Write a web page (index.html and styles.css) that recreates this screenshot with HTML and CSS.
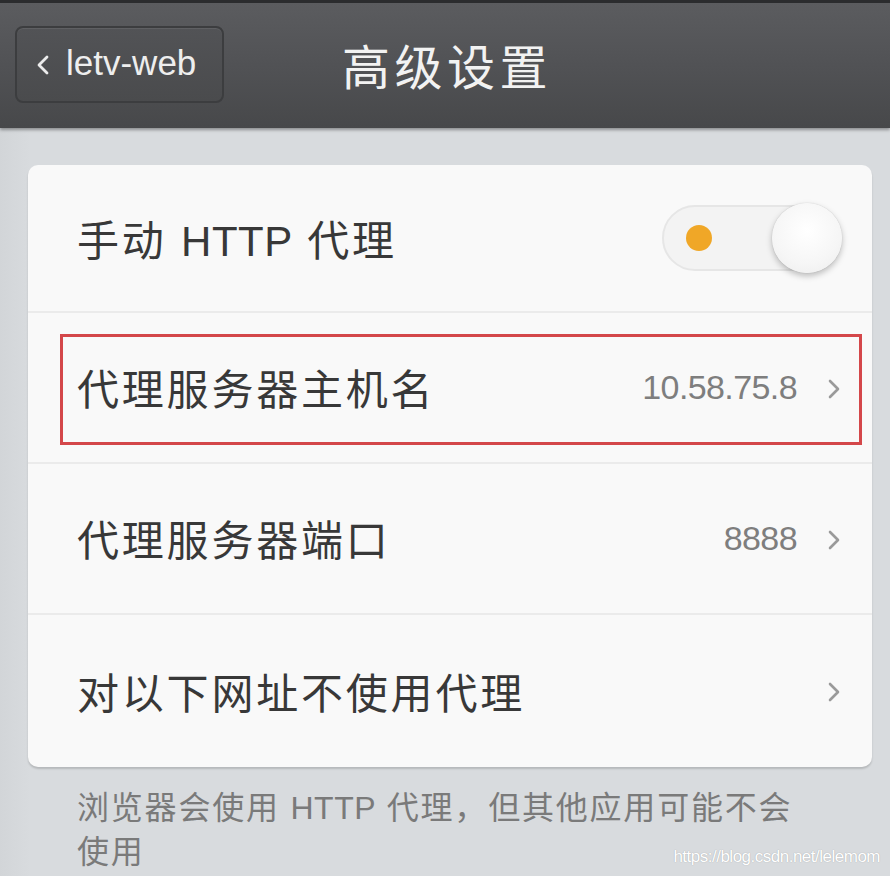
FILE: index.html
```html
<!DOCTYPE html>
<html lang="zh-CN">
<head>
<meta charset="utf-8">
<title>高级设置</title>
<link rel="stylesheet" href="styles.css">
</head>
<body>
<div class="screen">
  <header class="topbar">
    <div class="topbar-left">
      <button class="back-btn">
        <svg class="back-icon" width="16" height="22" viewBox="0 0 16 22"><polyline points="12,3 4,11 12,19" fill="none" stroke="#ececec" stroke-width="2.8" stroke-linecap="round" stroke-linejoin="round"/></svg>
        <span>letv-web</span>
      </button>
    </div>
    <h1 class="title">高级设置</h1>
    <div class="topbar-right"></div>
  </header>

  <main class="content">
    <section class="card">
      <div class="row">
        <span class="label">手动 <span class="latin">HTTP</span> 代理</span>
        <div class="toggle">
          <span class="toggle-dot"></span>
          <span class="toggle-knob"></span>
        </div>
      </div>
      <div class="row row-marked">
        <span class="label">代理服务器主机名</span>
        <span class="value">10.58.75.8</span>
        <svg class="chev" width="16" height="22" viewBox="0 0 16 22"><polyline points="4,3 12,11 4,19" fill="none" stroke="#9a9a9a" stroke-width="2.6" stroke-linecap="round" stroke-linejoin="round"/></svg>
        <span class="mark"></span>
      </div>
      <div class="row">
        <span class="label">代理服务器端口</span>
        <span class="value">8888</span>
        <svg class="chev" width="16" height="22" viewBox="0 0 16 22"><polyline points="4,3 12,11 4,19" fill="none" stroke="#9a9a9a" stroke-width="2.6" stroke-linecap="round" stroke-linejoin="round"/></svg>
      </div>
      <div class="row">
        <span class="label">对以下网址不使用代理</span>
        <span class="value"></span>
        <svg class="chev" width="16" height="22" viewBox="0 0 16 22"><polyline points="4,3 12,11 4,19" fill="none" stroke="#9a9a9a" stroke-width="2.6" stroke-linecap="round" stroke-linejoin="round"/></svg>
      </div>
    </section>
    <div class="note">
      <span class="note-line">浏览器会使用 <span class="latin">HTTP</span> 代理，但其他应用可能不会</span>
      <span class="note-line">使用</span>
    </div>
  </main>
  <div class="watermark">https://blog.csdn.net/lelemom</div>
</div>
</body>
</html>
```

FILE: styles.css
```css
html, body {
  margin: 0;
  padding: 0;
}
body {
  width: 890px;
  height: 876px;
  overflow: hidden;
  background: #d7dadd;
  font-family: "Liberation Sans", "Noto Sans CJK SC", sans-serif;
}
.screen {
  position: relative;
  width: 890px;
  height: 876px;
  background: linear-gradient(to right, #d2d5d8 0, #d8dbde 30px, #d8dbde 100%);
}
.topbar {
  height: 125px;
  border-top: 3px solid #2b2c2e;
  background: linear-gradient(to bottom, #5b5c5f 0%, #515255 50%, #47484a 100%);
  display: grid;
  grid-template-columns: 1fr auto 1fr;
  align-items: center;
  box-shadow: 0 2px 3px rgba(0, 0, 0, 0.35);
  position: relative;
  z-index: 1;
}
.topbar-left {
  padding-left: 15px;
  display: flex;
  align-items: center;
}
.back-btn {
  width: 209px;
  height: 77px;
  margin-top: -2px;
  box-sizing: border-box;
  border: 2px solid #3c3d3f;
  border-radius: 8px;
  background: linear-gradient(to bottom, #525356, #4a4b4d);
  box-shadow: inset 0 1px 0 rgba(255, 255, 255, 0.08);
  display: flex;
  align-items: center;
  padding: 0 0 0 18px;
  gap: 15px;
  color: #eeeeee;
  font-family: "Liberation Sans", sans-serif;
  font-size: 35px;
}
.back-btn span {
  margin-top: -3px;
}
.title {
  margin: 0;
  margin-top: -4px;
  color: #f2f2f2;
  font-family: "Noto Sans CJK SC", sans-serif;
  font-weight: 400;
  font-size: 48px;
  letter-spacing: 4.5px;
  padding-left: 4px;
}
.content {
  padding: 37px 18px 0 28px;
}
.card {
  background: #f9f9f9;
  border-radius: 10px;
  box-shadow: 0 2px 2px rgba(0, 0, 0, 0.16);
  overflow: hidden;
}
.row {
  position: relative;
  height: 149px;
  display: flex;
  align-items: center;
  padding: 0 30px 0 49px;
  border-bottom: 2px solid #ebebeb;
}
.row:first-child {
  height: 146px;
}
.row:last-child {
  border-bottom: none;
  height: 152px;
}
.label {
  flex: 1;
  color: #383838;
  font-size: 42px;
  letter-spacing: 2.8px;
  margin-top: -2px;
}
.latin {
  letter-spacing: 0.5px;
}
.value {
  color: #7e7e7e;
  font-size: 34px;
  letter-spacing: -0.6px;
  margin-right: 29px;
}
.chev {
  display: block;
  margin-top: 2px;
}
.mark {
  position: absolute;
  left: 32px;
  right: 10px;
  top: 21px;
  bottom: 17px;
  border: 3px solid #d4474a;
}
.toggle {
  position: relative;
  width: 180px;
  height: 70px;
}
.toggle::before {
  content: "";
  position: absolute;
  left: 0;
  top: 2px;
  right: 6px;
  bottom: 2px;
  border-radius: 34px;
  background: #f3f3f3;
  border: 2px solid #e6e6e6;
}
.toggle-dot {
  position: absolute;
  left: 24px;
  top: 22px;
  width: 26px;
  height: 26px;
  border-radius: 50%;
  background: #f0a727;
}
.toggle-knob {
  position: absolute;
  right: 0;
  top: 0;
  width: 70px;
  height: 70px;
  border-radius: 50%;
  background: radial-gradient(circle at 50% 40%, #ffffff 0, #f6f6f6 60%, #ececec 100%);
  box-shadow: 0 3px 6px rgba(0, 0, 0, 0.25), 0 0 1px rgba(0, 0, 0, 0.25);
}
.note {
  margin: 19px 0 0 49px;
  display: flex;
  flex-direction: column;
  align-items: flex-start;
  color: #7a7a7a;
  font-size: 32px;
  line-height: 44px;
  letter-spacing: 1.8px;
}
.note-line {
  display: block;
  white-space: nowrap;
}
.watermark {
  position: absolute;
  right: 10px;
  bottom: 9px;
  color: #ffffff;
  font-family: "Liberation Sans", sans-serif;
  font-size: 17px;
  letter-spacing: -0.5px;
  text-shadow: 0 0 1px rgba(0, 0, 0, 0.3);
}
```
